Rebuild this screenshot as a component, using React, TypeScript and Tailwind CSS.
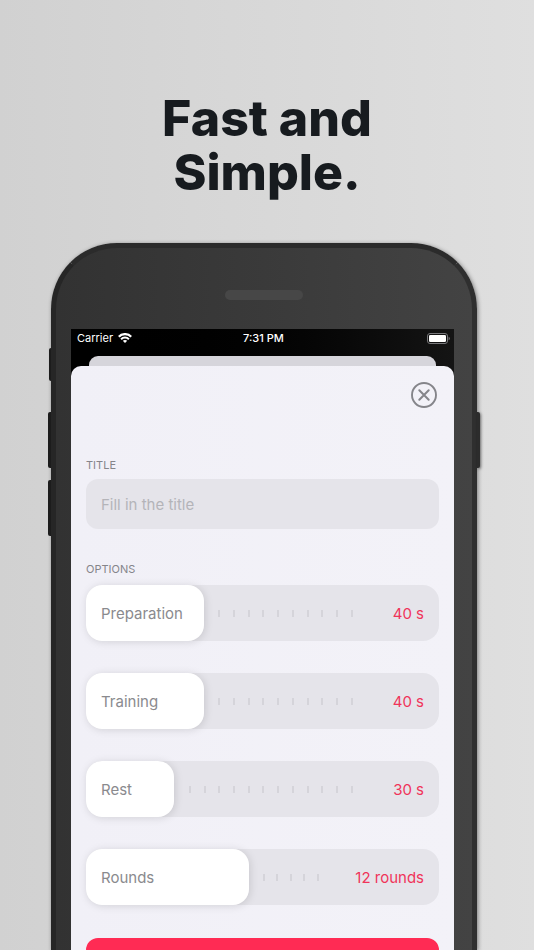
import { useState } from "react";

type Option = {
  id: string;
  label: string;
  unit: string;
  value: number;
  max: number;
  step: number;
  lastTick: number;
};

const OPTIONS: Option[] = [
  { id: "preparation", label: "Preparation", unit: "s", value: 40, max: 120, step: 5, lastTick: 18 },
  { id: "training", label: "Training", unit: "s", value: 40, max: 120, step: 5, lastTick: 18 },
  { id: "rest", label: "Rest", unit: "s", value: 30, max: 120, step: 5, lastTick: 18 },
  { id: "rounds", label: "Rounds", unit: "rounds", value: 12, max: 26, step: 1, lastTick: 17 },
];

function WifiIcon() {
  return (
    <svg viewBox="0 0 28 20" className="w-[14px] h-[10px]" fill="none" aria-hidden="true">
      <path d="M1.6 7.4C8.4 0.4 19.6 0.4 26.4 7.4" stroke="white" strokeWidth="4.4" />
      <path d="M6.2 12.4C10.5 8 17.5 8 21.8 12.4" stroke="white" strokeWidth="4" />
      <path d="M14 20L9.6 15.6C12.2 13.4 15.8 13.4 18.4 15.6Z" fill="white" />
    </svg>
  );
}

function BatteryIcon() {
  return (
    <svg viewBox="0 0 23 11" className="w-[23px] h-[11px]" fill="none" aria-hidden="true">
      <rect x="0.5" y="0.5" width="20" height="10" rx="2.5" stroke="#77777a" />
      <rect x="2" y="2" width="17" height="7" rx="1.3" fill="white" />
      <path d="M21.6 3.8C23.2 4.4 23.2 6.6 21.6 7.2Z" fill="#77777a" />
    </svg>
  );
}

function CloseIcon() {
  return (
    <svg viewBox="0 0 26 26" className="size-[26px]" fill="none" stroke="#85858a" aria-hidden="true">
      <circle cx="13" cy="13" r="12" strokeWidth="1.9" />
      <path d="M8.3 8.3L17.7 17.7M17.7 8.3L8.3 17.7" strokeWidth="2" strokeLinecap="round" />
    </svg>
  );
}

function StatusBar() {
  return (
    <div className="grid grid-cols-3 items-center h-[18px] pl-[6px] pr-1 text-[11px] leading-[18px] text-white">
      <div className="flex items-center gap-[5px]">
        <span>Carrier</span>
        <WifiIcon />
      </div>
      <span className="text-center font-medium">7:31 PM</span>
      <div className="flex justify-end">
        <BatteryIcon />
      </div>
    </div>
  );
}

function OptionSlider({ option }: { option: Option }) {
  const [value, setValue] = useState(option.value);
  const cells = Math.ceil(option.max / option.step);
  const filled = value / option.step;

  return (
    <div className="relative grid h-14 shrink-0 rounded-2xl bg-[#e5e4ea]">
      <div className="[grid-area:1/1] flex items-center" aria-hidden="true">
        {Array.from({ length: cells }, (_, i) => (
          <span key={i} className="flex-1">
            {i > filled && i <= option.lastTick && <span className="block w-[2px] h-[7px] bg-[#d5d4da]" />}
          </span>
        ))}
      </div>
      <div
        className="[grid-area:1/1] rounded-2xl bg-white shadow-[1px_1px_9px_rgba(0,0,0,0.13)]"
        style={{ width: `${(value / option.max) * 100}%` }}
      />
      <div className="[grid-area:1/1] flex items-center justify-between px-[15px] pt-[2px] text-[15px] leading-5">
        <label htmlFor={option.id} className="text-[#8a8a8e]">
          {option.label}
        </label>
        <output htmlFor={option.id} className="text-[#f0345a]">
          {value} {option.unit}
        </output>
      </div>
      <input
        id={option.id}
        type="range"
        min={0}
        max={option.max}
        step={option.step}
        value={value}
        onChange={(e) => setValue(Number(e.target.value))}
        className="absolute inset-0 size-full opacity-0 cursor-pointer"
      />
    </div>
  );
}

function TimerForm() {
  const [title, setTitle] = useState("");

  return (
    <form
      onSubmit={(e) => e.preventDefault()}
      className="flex-1 flex flex-col px-[15px] pt-4 rounded-t-[10px] bg-linear-to-r from-[#f1f0f7] to-[#f3f2f8]"
    >
      <button type="button" aria-label="Close" className="self-end mr-[2px]">
        <CloseIcon />
      </button>

      <label htmlFor="title" className="mt-[49px] text-[11px] leading-4 text-[#85858a]">
        TITLE
      </label>
      <input
        id="title"
        type="text"
        value={title}
        onChange={(e) => setTitle(e.target.value)}
        placeholder="Fill in the title"
        className="mt-[6px] h-[50px] shrink-0 w-full rounded-xl bg-[#e5e4ea] px-[15px] text-[15px] text-[#3a3a3c] placeholder:text-[#b4b4b9] outline-none"
      />

      <h2 className="mt-8 text-[11px] leading-4 text-[#85858a]">OPTIONS</h2>
      <div className="mt-2 flex flex-col gap-8">
        {OPTIONS.map((option) => (
          <OptionSlider key={option.id} option={option} />
        ))}
      </div>

      <button
        type="submit"
        aria-label="Save"
        className="mt-[33px] h-[50px] shrink-0 rounded-xl bg-[#ff2b54]"
      />
    </form>
  );
}

function Phone() {
  return (
    <div className="relative flex-1 flex flex-col min-h-0 mt-11 ml-[51px] mr-[57px] pl-[15px] pr-[18px] pt-[81px] rounded-t-[66px] border-[5px] border-b-0 border-[#262626] border-t-[#2b2b2b] border-r-[#2f2f2f] bg-linear-to-r from-[#323232] via-[#3a3a3a] to-[#434343] shadow-[1px_1px_4px_rgba(0,0,0,0.45)]">
      <span className="absolute -left-[7px] top-[100px] w-[2px] h-[33px] rounded-l-xs bg-[#1c1c1c]" />
      <span className="absolute -left-[8px] top-[164px] w-[3px] h-[56px] rounded-l-xs bg-[#1c1c1c]" />
      <span className="absolute -left-[8px] top-[232px] w-[3px] h-[56px] rounded-l-xs bg-[#1c1c1c]" />
      <span className="absolute -right-[8px] top-[164px] w-[3px] h-[56px] rounded-r-xs bg-[#2c2c2c] shadow-[1px_1px_3px_rgba(0,0,0,0.5)]" />
      <span className="absolute left-1/2 top-[42px] w-[78px] h-[10px] -translate-x-1/2 rounded-full bg-[#474747]" />

      <div className="flex-1 flex flex-col bg-linear-to-r from-black to-[#141414]">
        <StatusBar />
        <div className="mt-[9px] mx-[18px] h-[10px] shrink-0 rounded-t-[9px] bg-[#d6d5db]" />
        <TimerForm />
      </div>
    </div>
  );
}

export default function App() {
  return (
    <main className="flex flex-col h-screen overflow-hidden bg-linear-to-r from-[#d1d1d1] to-[#dfdfdf] font-['Inter','Liberation_Sans',sans-serif]">
      <h1 className="mt-[91px] text-center text-[50px] leading-[54px] font-extrabold text-[#171b1f]">
        Fast and
        <br />
        Simple.
      </h1>
      <Phone />
    </main>
  );
}
